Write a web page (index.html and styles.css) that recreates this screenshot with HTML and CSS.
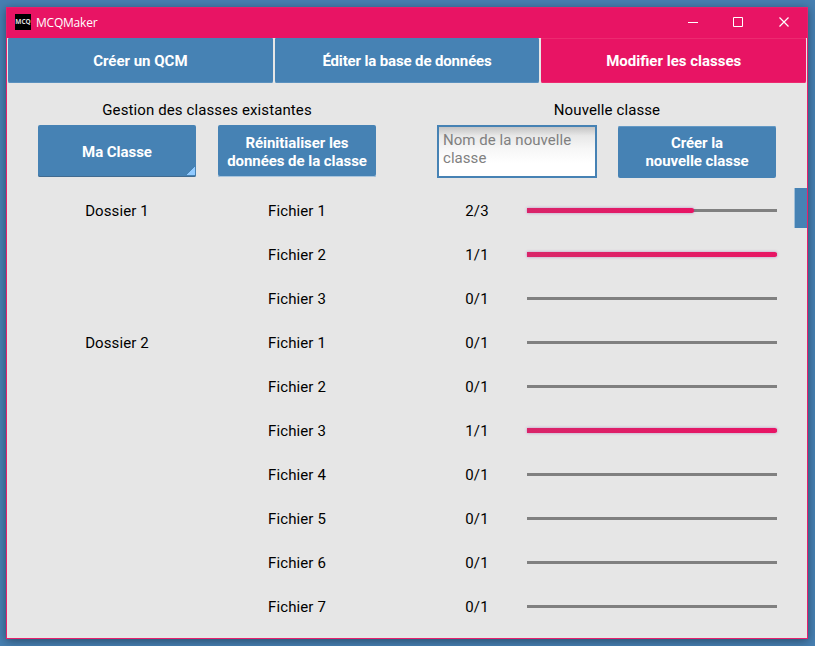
FILE: index.html
```html
<!DOCTYPE html>
<html lang="fr">
<head>
<meta charset="utf-8">
<title>MCQMaker</title>
<link rel="stylesheet" href="styles.css">
</head>
<body>
<div class="window">
  <header class="titlebar">
    <span class="logo">MCQ</span>
    <span class="title">MCQMaker</span>
    <svg class="controls" width="104" height="12" viewBox="0 0 104 12" fill="none" stroke="#fff">
      <path d="M0 6.5h10"/>
      <path d="M45.5 1.5h9v9h-9z"/>
      <path d="M91.5 1.5l9 9M100.5 1.5l-9 9" stroke-width="1.2"/>
    </svg>
  </header>
  <nav class="tabs">
    <a class="tab">Créer un QCM</a>
    <a class="tab wide">Éditer la base de données</a>
    <a class="tab active">Modifier les classes</a>
  </nav>
  <main>
    <div class="tools">
      <section class="group">
        <h2>Gestion des classes existantes</h2>
        <div class="fields">
          <div class="button select">Ma Classe</div>
          <div class="button">Réinitialiser les<br>données de la classe</div>
        </div>
      </section>
      <section class="group">
        <h2>Nouvelle classe</h2>
        <div class="fields">
          <div class="input">Nom de la nouvelle<br>classe</div>
          <div class="button create">Créer la<br>nouvelle classe</div>
        </div>
      </section>
    </div>
    <div class="list">
      <div class="rows">
        <div class="row"><span>Dossier 1</span><span>Fichier 1</span><span class="count">2/3</span><div class="track"><div class="bar" style="width:66.7%"></div></div></div>
        <div class="row"><span></span><span>Fichier 2</span><span class="count">1/1</span><div class="track"><div class="bar" style="width:100%"></div></div></div>
        <div class="row"><span></span><span>Fichier 3</span><span class="count">0/1</span><div class="track"></div></div>
        <div class="row"><span>Dossier 2</span><span>Fichier 1</span><span class="count">0/1</span><div class="track"></div></div>
        <div class="row"><span></span><span>Fichier 2</span><span class="count">0/1</span><div class="track"></div></div>
        <div class="row"><span></span><span>Fichier 3</span><span class="count">1/1</span><div class="track"><div class="bar" style="width:100%"></div></div></div>
        <div class="row"><span></span><span>Fichier 4</span><span class="count">0/1</span><div class="track"></div></div>
        <div class="row"><span></span><span>Fichier 5</span><span class="count">0/1</span><div class="track"></div></div>
        <div class="row"><span></span><span>Fichier 6</span><span class="count">0/1</span><div class="track"></div></div>
        <div class="row"><span></span><span>Fichier 7</span><span class="count">0/1</span><div class="track"></div></div>
      </div>
      <div class="scroll-thumb"></div>
    </div>
  </main>
</div>
</body>
</html>
```
FILE: styles.css
```css
* { box-sizing: border-box; }
body {
  margin: 0;
  height: 646px;
  padding: 7px 7px 7px 6px;
  overflow: hidden;
  background: #467fb1;
  font: 15px/18px Roboto, "Liberation Sans", sans-serif;
  letter-spacing: 0.11px;
  color: #000;
}
.window {
  width: 802px;
  height: 632px;
  border: 1px solid #e6206c;
  background: #e6e6e6;
  box-shadow: 0 2px 9px rgba(0, 0, 0, 0.4);
}
.titlebar {
  display: flex;
  align-items: center;
  height: 30px;
  padding: 0 15px 0 8px;
  background: #e81464;
  color: #fff;
}
.logo {
  width: 16px;
  height: 16px;
  margin-top: -2px;
  background: #000;
  color: #ddd;
  font: bold 6.5px/16px "Open Sans", sans-serif;
  letter-spacing: 0;
  text-align: center;
}
.title {
  margin: 0 auto 0 5px;
  font: 12px/16px "Open Sans", sans-serif;
  letter-spacing: -0.22px;
}
.controls { margin-top: -2px; }
.tabs {
  display: flex;
  gap: 2px;
  height: 45px;
  padding: 0 1px;
}
.tab {
  flex: 1;
  border-radius: 1px 1px 2px 2px;
  background: #4682b4;
  box-shadow: inset 0 -1px #5b91bf;
  color: #fff;
  font-weight: bold;
  letter-spacing: 0;
  line-height: 47px;
  text-align: center;
}
.tab.wide { letter-spacing: -0.14px; }
.tab.active {
  background: #e81464;
  box-shadow: inset 0 1px #ec2a70, inset 0 -1px #ec2a70;
}
.tools {
  display: flex;
  gap: 60px;
  padding: 18px 29px 0 30px;
}
.group { width: 340px; }
h2 {
  margin: 0;
  font: inherit;
  text-align: center;
}
.fields {
  display: flex;
  gap: 20px;
  height: 54px;
  margin-top: 5px;
}
.button {
  display: flex;
  align-items: center;
  justify-content: center;
  width: 160px;
  height: 54px;
  padding-top: 2px;
  border: 1px solid transparent;
  border-radius: 3px;
  background: #4682b4 padding-box;
  box-shadow: inset 0 -1px #a9c5dd;
  color: #fff;
  font-weight: bold;
  letter-spacing: -0.05px;
  text-align: center;
}
.select {
  background:
    linear-gradient(135deg, transparent 50%, #91caff 50%) right 1px bottom 2px / 9px 8px no-repeat padding-box,
    #4682b4 padding-box;
  box-shadow: inset 0 -1px #416b90;
}
.create {
  margin-top: 1px;
  padding-top: 0;
  box-shadow: inset 0 1px #6499c5;
}
.input {
  width: 160px;
  height: 53px;
  margin-top: 1px;
  padding: 4px;
  border: 2px solid #4682b4;
  background: linear-gradient(#c4c4c4, #e8e8e8 18%, #f7f7f7 45%, #fff 75%);
  color: #808080;
  letter-spacing: 0.05px;
}
.list {
  display: flex;
  justify-content: space-between;
  margin-top: 10px;
}
.rows { padding-left: 20px; }
.row {
  display: grid;
  grid-template-columns: 180px 180px 140px 250px;
  align-items: center;
  height: 44px;
  text-align: center;
}
.row span { padding-top: 2px; }
.row .count { padding-left: 40px; }
.track {
  display: flex;
  align-items: center;
  height: 3px;
  background: #808080;
}
.bar {
  flex: none;
  height: 5px;
  border-radius: 0 2px 2px 0;
  background: linear-gradient(90deg, #d92469, #e81464);
  box-shadow: 0 0 3px rgba(130, 30, 150, 0.45);
}
.scroll-thumb {
  width: 12px;
  height: 40px;
  background: #4682b4;
  box-shadow: -1px 0 #a0bfd8;
}
```
